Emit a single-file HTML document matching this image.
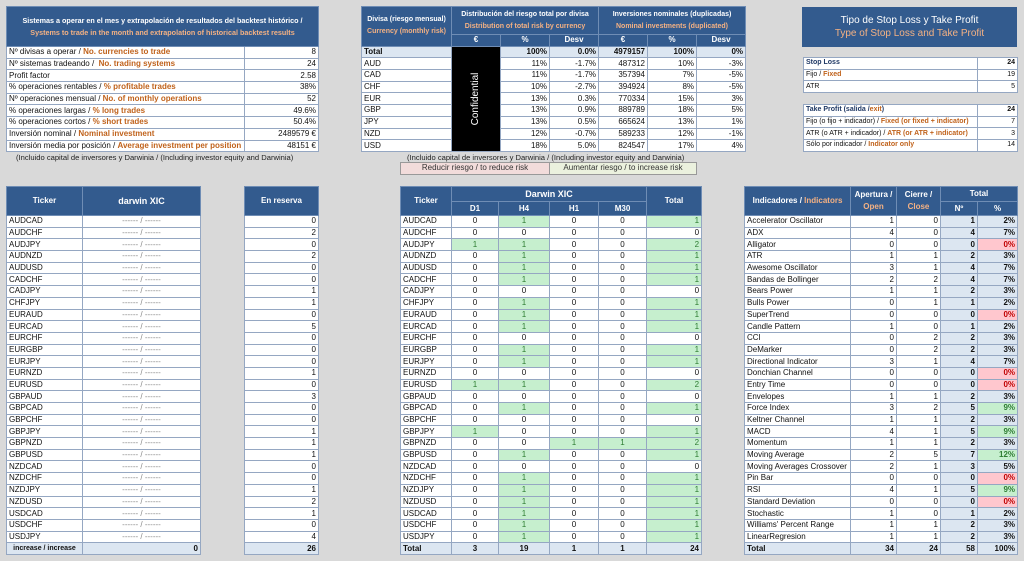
<!DOCTYPE html>
<html><head><meta charset="utf-8"><style>
*{margin:0;padding:0;box-sizing:border-box}
body{width:1024px;height:561px;background:#d9d9d9;font-family:"Liberation Sans",sans-serif;font-size:8px;color:#111;position:relative;overflow:hidden}
table{position:absolute;border-collapse:collapse;table-layout:fixed;background:#fff}
td{border:1px solid #95a7c2;height:11.7px;line-height:10px;padding:0 2px;white-space:nowrap;overflow:hidden}
.h{background:#335b8e;color:#fff;font-weight:bold;text-align:center;border-color:#6f8db5}
.o{color:#c0621b;font-weight:bold}
.ho{color:#f4b183}
.r{text-align:right}.c{text-align:center}.b{font-weight:bold}
.lb{background:#dce6f1}
.g{background:#c6efce;color:#2e7d32}
.rd{background:#ffc7ce;color:#c00000}
.note{position:absolute;font-size:7.6px;color:#222;white-space:nowrap}
.dash{color:#888;text-align:center}
.sm{font-size:7px}
</style></head><body>

<!-- Top-left -->
<table style="left:6px;top:6px;width:312px">
<col style="width:238px"><col style="width:74px">
<tr><td colspan="2" class="h" style="height:40px;line-height:12px;font-size:7.2px">Sistemas a operar en el mes y extrapolación de resultados del backtest histórico /<br><span class="ho">Systems to trade in the month and extrapolation of historical backtest results</span></td></tr>
<tr><td>Nº divisas a operar / <span class="o">No. currencies to trade</span></td><td class="r">8</td></tr>
<tr><td>Nº sistemas tradeando / &nbsp;<span class="o">No. trading systems</span></td><td class="r">24</td></tr>
<tr><td>Profit factor</td><td class="r">2.58</td></tr>
<tr><td>% operaciones rentables / <span class="o">% profitable trades</span></td><td class="r">38%</td></tr>
<tr><td>Nº operaciones mensual / <span class="o">No. of monthly operations</span></td><td class="r">52</td></tr>
<tr><td>% operaciones largas / <span class="o">% long trades</span></td><td class="r">49.6%</td></tr>
<tr><td>% operaciones cortos / <span class="o">% short trades</span></td><td class="r">50.4%</td></tr>
<tr><td>Inversión nominal / <span class="o">Nominal investment</span></td><td class="r">2489579 €</td></tr>
<tr><td>Inversión media por posición / <span class="o">Average investment per position</span></td><td class="r">48151 €</td></tr>
</table>
<div class="note" style="left:16px;top:153px">(Incluido capital de inversores y Darwinia / (Including investor equity and Darwinia)</div>

<!-- Top-mid -->
<table style="left:361px;top:6px;width:384px">
<col style="width:90px"><col style="width:49px"><col style="width:49px"><col style="width:49px"><col style="width:49px"><col style="width:49px"><col style="width:49px">
<tr><td rowspan="2" class="h" style="line-height:12px;font-size:7px">Divisa (riesgo mensual)<br><span class="ho">Currency (monthly risk)</span></td><td colspan="3" class="h" style="height:28px;line-height:12px;font-size:7px">Distribución del riesgo total por divisa<br><span class="ho">Distribution of total risk by currency</span></td><td colspan="3" class="h" style="line-height:12px;font-size:7px">Inversiones nominales (duplicadas)<br><span class="ho">Nominal investments (duplicated)</span></td></tr>
<tr><td class="h">€</td><td class="h">%</td><td class="h">Desv</td><td class="h">€</td><td class="h">%</td><td class="h">Desv</td></tr>
<tr class="lb b"><td>Total</td><td rowspan="9" style="background:#000;color:#fff;position:relative"><div style="position:absolute;left:50%;top:50%;transform:translate(-50%,-50%) rotate(-90deg);font-size:10px;font-weight:normal">Confidential</div></td><td class="r">100%</td><td class="r">0.0%</td><td class="r">4979157</td><td class="r">100%</td><td class="r">0%</td></tr>
<tr><td>AUD</td><td class="r">11%</td><td class="r">-1.7%</td><td class="r">487312</td><td class="r">10%</td><td class="r">-3%</td></tr>
<tr><td>CAD</td><td class="r">11%</td><td class="r">-1.7%</td><td class="r">357394</td><td class="r">7%</td><td class="r">-5%</td></tr>
<tr><td>CHF</td><td class="r">10%</td><td class="r">-2.7%</td><td class="r">394924</td><td class="r">8%</td><td class="r">-5%</td></tr>
<tr><td>EUR</td><td class="r">13%</td><td class="r">0.3%</td><td class="r">770334</td><td class="r">15%</td><td class="r">3%</td></tr>
<tr><td>GBP</td><td class="r">13%</td><td class="r">0.9%</td><td class="r">889789</td><td class="r">18%</td><td class="r">5%</td></tr>
<tr><td>JPY</td><td class="r">13%</td><td class="r">0.5%</td><td class="r">665624</td><td class="r">13%</td><td class="r">1%</td></tr>
<tr><td>NZD</td><td class="r">12%</td><td class="r">-0.7%</td><td class="r">589233</td><td class="r">12%</td><td class="r">-1%</td></tr>
<tr><td>USD</td><td class="r">18%</td><td class="r">5.0%</td><td class="r">824547</td><td class="r">17%</td><td class="r">4%</td></tr>
</table>
<div class="note" style="left:407px;top:153px">(Incluido capital de inversores y Darwinia / (Including investor equity and Darwinia)</div>
<table style="left:400px;top:162px;width:296px">
<col style="width:149px"><col style="width:147px">
<tr><td class="c" style="background:#f2dcdb;color:#333;border-color:#999">Reducir riesgo / to reduce risk</td><td class="c" style="background:#ebf1de;color:#333;border-color:#999">Aumentar riesgo / to increase risk</td></tr>
</table>

<!-- Top-right -->
<div style="position:absolute;left:802px;top:7px;width:215px;height:40px;background:#335b8e;color:#fff;text-align:center;font-size:10px;line-height:13px;padding-top:7px">Tipo de Stop Loss y Take Profit<br><span class="ho">Type of Stop Loss and Take Profit</span></div>
<table style="left:803px;top:57px;width:214px;font-size:7px">
<col style="width:174px"><col style="width:40px">
<tr><td class="b" style="color:#1f3864">Stop Loss</td><td class="r b">24</td></tr>
<tr><td>Fijo / <span class="o">Fixed</span></td><td class="r">19</td></tr>
<tr><td>ATR</td><td class="r">5</td></tr>
</table>
<table style="left:803px;top:104px;width:214px;font-size:7px">
<col style="width:174px"><col style="width:40px">
<tr><td class="b" style="color:#1f3864">Take Profit (salida /<span class="o">exit</span>)</td><td class="r b">24</td></tr>
<tr><td>Fijo (o fijo + indicador) / <span class="o">Fixed (or fixed + indicator)</span></td><td class="r">7</td></tr>
<tr><td>ATR (o ATR + indicador) / <span class="o">ATR (or ATR + indicator)</span></td><td class="r">3</td></tr>
<tr><td>Sólo por indicador / <span class="o">Indicator only</span></td><td class="r">14</td></tr>
</table>

<!-- Bottom: ticker/darwin -->
<table style="left:6px;top:186px;width:194px">
<col style="width:76px"><col style="width:118px">
<tr><td class="h" style="height:29px">Ticker</td><td class="h" style="font-size:9px">darwin XIC</td></tr>
<tr><td>AUDCAD</td><td class="dash">------ / ------</td></tr>
<tr><td>AUDCHF</td><td class="dash">------ / ------</td></tr>
<tr><td>AUDJPY</td><td class="dash">------ / ------</td></tr>
<tr><td>AUDNZD</td><td class="dash">------ / ------</td></tr>
<tr><td>AUDUSD</td><td class="dash">------ / ------</td></tr>
<tr><td>CADCHF</td><td class="dash">------ / ------</td></tr>
<tr><td>CADJPY</td><td class="dash">------ / ------</td></tr>
<tr><td>CHFJPY</td><td class="dash">------ / ------</td></tr>
<tr><td>EURAUD</td><td class="dash">------ / ------</td></tr>
<tr><td>EURCAD</td><td class="dash">------ / ------</td></tr>
<tr><td>EURCHF</td><td class="dash">------ / ------</td></tr>
<tr><td>EURGBP</td><td class="dash">------ / ------</td></tr>
<tr><td>EURJPY</td><td class="dash">------ / ------</td></tr>
<tr><td>EURNZD</td><td class="dash">------ / ------</td></tr>
<tr><td>EURUSD</td><td class="dash">------ / ------</td></tr>
<tr><td>GBPAUD</td><td class="dash">------ / ------</td></tr>
<tr><td>GBPCAD</td><td class="dash">------ / ------</td></tr>
<tr><td>GBPCHF</td><td class="dash">------ / ------</td></tr>
<tr><td>GBPJPY</td><td class="dash">------ / ------</td></tr>
<tr><td>GBPNZD</td><td class="dash">------ / ------</td></tr>
<tr><td>GBPUSD</td><td class="dash">------ / ------</td></tr>
<tr><td>NZDCAD</td><td class="dash">------ / ------</td></tr>
<tr><td>NZDCHF</td><td class="dash">------ / ------</td></tr>
<tr><td>NZDJPY</td><td class="dash">------ / ------</td></tr>
<tr><td>NZDUSD</td><td class="dash">------ / ------</td></tr>
<tr><td>USDCAD</td><td class="dash">------ / ------</td></tr>
<tr><td>USDCHF</td><td class="dash">------ / ------</td></tr>
<tr><td>USDJPY</td><td class="dash">------ / ------</td></tr>
<tr class="lb b"><td class="c sm">increase / increase</td><td class="r">0</td></tr>
</table>

<!-- En reserva -->
<table style="left:244px;top:186px;width:74px">
<col style="width:74px">
<tr><td class="h" style="height:29px">En reserva</td></tr>
<tr><td class="r">0</td></tr><tr><td class="r">2</td></tr><tr><td class="r">0</td></tr><tr><td class="r">2</td></tr><tr><td class="r">0</td></tr><tr><td class="r">0</td></tr><tr><td class="r">1</td></tr><tr><td class="r">1</td></tr><tr><td class="r">0</td></tr><tr><td class="r">5</td></tr><tr><td class="r">0</td></tr><tr><td class="r">0</td></tr><tr><td class="r">0</td></tr><tr><td class="r">1</td></tr><tr><td class="r">0</td></tr><tr><td class="r">3</td></tr><tr><td class="r">0</td></tr><tr><td class="r">0</td></tr><tr><td class="r">1</td></tr><tr><td class="r">1</td></tr><tr><td class="r">1</td></tr><tr><td class="r">0</td></tr><tr><td class="r">0</td></tr><tr><td class="r">1</td></tr><tr><td class="r">2</td></tr><tr><td class="r">1</td></tr><tr><td class="r">0</td></tr><tr><td class="r">4</td></tr>
<tr class="lb b"><td class="r">26</td></tr>
</table>

<!-- Darwin XIC -->
<table style="left:400px;top:186px;width:301px">
<col style="width:51px"><col style="width:47px"><col style="width:51px"><col style="width:49px"><col style="width:48px"><col style="width:55px">
<tr><td rowspan="2" class="h">Ticker</td><td colspan="4" class="h" style="height:15px;font-size:9px">Darwin XIC</td><td rowspan="2" class="h">Total</td></tr>
<tr><td class="h" style="height:14px">D1</td><td class="h">H4</td><td class="h">H1</td><td class="h">M30</td></tr>
<tr><td>AUDCAD</td><td class="c">0</td><td class="c g">1</td><td class="c">0</td><td class="c">0</td><td class="r g">1</td></tr>
<tr><td>AUDCHF</td><td class="c">0</td><td class="c">0</td><td class="c">0</td><td class="c">0</td><td class="r">0</td></tr>
<tr><td>AUDJPY</td><td class="c g">1</td><td class="c g">1</td><td class="c">0</td><td class="c">0</td><td class="r g">2</td></tr>
<tr><td>AUDNZD</td><td class="c">0</td><td class="c g">1</td><td class="c">0</td><td class="c">0</td><td class="r g">1</td></tr>
<tr><td>AUDUSD</td><td class="c">0</td><td class="c g">1</td><td class="c">0</td><td class="c">0</td><td class="r g">1</td></tr>
<tr><td>CADCHF</td><td class="c">0</td><td class="c g">1</td><td class="c">0</td><td class="c">0</td><td class="r g">1</td></tr>
<tr><td>CADJPY</td><td class="c">0</td><td class="c">0</td><td class="c">0</td><td class="c">0</td><td class="r">0</td></tr>
<tr><td>CHFJPY</td><td class="c">0</td><td class="c g">1</td><td class="c">0</td><td class="c">0</td><td class="r g">1</td></tr>
<tr><td>EURAUD</td><td class="c">0</td><td class="c g">1</td><td class="c">0</td><td class="c">0</td><td class="r g">1</td></tr>
<tr><td>EURCAD</td><td class="c">0</td><td class="c g">1</td><td class="c">0</td><td class="c">0</td><td class="r g">1</td></tr>
<tr><td>EURCHF</td><td class="c">0</td><td class="c">0</td><td class="c">0</td><td class="c">0</td><td class="r">0</td></tr>
<tr><td>EURGBP</td><td class="c">0</td><td class="c g">1</td><td class="c">0</td><td class="c">0</td><td class="r g">1</td></tr>
<tr><td>EURJPY</td><td class="c">0</td><td class="c g">1</td><td class="c">0</td><td class="c">0</td><td class="r g">1</td></tr>
<tr><td>EURNZD</td><td class="c">0</td><td class="c">0</td><td class="c">0</td><td class="c">0</td><td class="r">0</td></tr>
<tr><td>EURUSD</td><td class="c g">1</td><td class="c g">1</td><td class="c">0</td><td class="c">0</td><td class="r g">2</td></tr>
<tr><td>GBPAUD</td><td class="c">0</td><td class="c">0</td><td class="c">0</td><td class="c">0</td><td class="r">0</td></tr>
<tr><td>GBPCAD</td><td class="c">0</td><td class="c g">1</td><td class="c">0</td><td class="c">0</td><td class="r g">1</td></tr>
<tr><td>GBPCHF</td><td class="c">0</td><td class="c">0</td><td class="c">0</td><td class="c">0</td><td class="r">0</td></tr>
<tr><td>GBPJPY</td><td class="c g">1</td><td class="c">0</td><td class="c">0</td><td class="c">0</td><td class="r g">1</td></tr>
<tr><td>GBPNZD</td><td class="c">0</td><td class="c">0</td><td class="c g">1</td><td class="c g">1</td><td class="r g">2</td></tr>
<tr><td>GBPUSD</td><td class="c">0</td><td class="c g">1</td><td class="c">0</td><td class="c">0</td><td class="r g">1</td></tr>
<tr><td>NZDCAD</td><td class="c">0</td><td class="c">0</td><td class="c">0</td><td class="c">0</td><td class="r">0</td></tr>
<tr><td>NZDCHF</td><td class="c">0</td><td class="c g">1</td><td class="c">0</td><td class="c">0</td><td class="r g">1</td></tr>
<tr><td>NZDJPY</td><td class="c">0</td><td class="c g">1</td><td class="c">0</td><td class="c">0</td><td class="r g">1</td></tr>
<tr><td>NZDUSD</td><td class="c">0</td><td class="c g">1</td><td class="c">0</td><td class="c">0</td><td class="r g">1</td></tr>
<tr><td>USDCAD</td><td class="c">0</td><td class="c g">1</td><td class="c">0</td><td class="c">0</td><td class="r g">1</td></tr>
<tr><td>USDCHF</td><td class="c">0</td><td class="c g">1</td><td class="c">0</td><td class="c">0</td><td class="r g">1</td></tr>
<tr><td>USDJPY</td><td class="c">0</td><td class="c g">1</td><td class="c">0</td><td class="c">0</td><td class="r g">1</td></tr>
<tr class="lb b"><td>Total</td><td class="c">3</td><td class="c">19</td><td class="c">1</td><td class="c">1</td><td class="r">24</td></tr>
</table>

<!-- Indicators -->
<table style="left:744px;top:186px;width:273px">
<col style="width:106px"><col style="width:46px"><col style="width:44px"><col style="width:37px"><col style="width:40px">
<tr><td rowspan="2" class="h">Indicadores / <span class="ho">Indicators</span></td><td rowspan="2" class="h" style="line-height:12px">Apertura /<br><span class="ho">Open</span></td><td rowspan="2" class="h" style="line-height:12px">Cierre /<br><span class="ho">Close</span></td><td colspan="2" class="h" style="height:15px">Total</td></tr>
<tr><td class="h" style="height:14px">Nº</td><td class="h">%</td></tr>
<tr><td>Accelerator Oscillator</td><td class="r">1</td><td class="r">0</td><td class="r b lb">1</td><td class="r b lb">2%</td></tr>
<tr><td>ADX</td><td class="r">4</td><td class="r">0</td><td class="r b lb">4</td><td class="r b lb">7%</td></tr>
<tr><td>Alligator</td><td class="r">0</td><td class="r">0</td><td class="r b lb">0</td><td class="r b rd">0%</td></tr>
<tr><td>ATR</td><td class="r">1</td><td class="r">1</td><td class="r b lb">2</td><td class="r b lb">3%</td></tr>
<tr><td>Awesome Oscillator</td><td class="r">3</td><td class="r">1</td><td class="r b lb">4</td><td class="r b lb">7%</td></tr>
<tr><td>Bandas de Bollinger</td><td class="r">2</td><td class="r">2</td><td class="r b lb">4</td><td class="r b lb">7%</td></tr>
<tr><td>Bears Power</td><td class="r">1</td><td class="r">1</td><td class="r b lb">2</td><td class="r b lb">3%</td></tr>
<tr><td>Bulls Power</td><td class="r">0</td><td class="r">1</td><td class="r b lb">1</td><td class="r b lb">2%</td></tr>
<tr><td>SuperTrend</td><td class="r">0</td><td class="r">0</td><td class="r b lb">0</td><td class="r b rd">0%</td></tr>
<tr><td>Candle Pattern</td><td class="r">1</td><td class="r">0</td><td class="r b lb">1</td><td class="r b lb">2%</td></tr>
<tr><td>CCI</td><td class="r">0</td><td class="r">2</td><td class="r b lb">2</td><td class="r b lb">3%</td></tr>
<tr><td>DeMarker</td><td class="r">0</td><td class="r">2</td><td class="r b lb">2</td><td class="r b lb">3%</td></tr>
<tr><td>Directional Indicator</td><td class="r">3</td><td class="r">1</td><td class="r b lb">4</td><td class="r b lb">7%</td></tr>
<tr><td>Donchian Channel</td><td class="r">0</td><td class="r">0</td><td class="r b lb">0</td><td class="r b rd">0%</td></tr>
<tr><td>Entry Time</td><td class="r">0</td><td class="r">0</td><td class="r b lb">0</td><td class="r b rd">0%</td></tr>
<tr><td>Envelopes</td><td class="r">1</td><td class="r">1</td><td class="r b lb">2</td><td class="r b lb">3%</td></tr>
<tr><td>Force Index</td><td class="r">3</td><td class="r">2</td><td class="r b lb">5</td><td class="r b g">9%</td></tr>
<tr><td>Keltner Channel</td><td class="r">1</td><td class="r">1</td><td class="r b lb">2</td><td class="r b lb">3%</td></tr>
<tr><td>MACD</td><td class="r">4</td><td class="r">1</td><td class="r b lb">5</td><td class="r b g">9%</td></tr>
<tr><td>Momentum</td><td class="r">1</td><td class="r">1</td><td class="r b lb">2</td><td class="r b lb">3%</td></tr>
<tr><td>Moving Average</td><td class="r">2</td><td class="r">5</td><td class="r b lb">7</td><td class="r b g">12%</td></tr>
<tr><td>Moving Averages Crossover</td><td class="r">2</td><td class="r">1</td><td class="r b lb">3</td><td class="r b lb">5%</td></tr>
<tr><td>Pin Bar</td><td class="r">0</td><td class="r">0</td><td class="r b lb">0</td><td class="r b rd">0%</td></tr>
<tr><td>RSI</td><td class="r">4</td><td class="r">1</td><td class="r b lb">5</td><td class="r b g">9%</td></tr>
<tr><td>Standard Deviation</td><td class="r">0</td><td class="r">0</td><td class="r b lb">0</td><td class="r b rd">0%</td></tr>
<tr><td>Stochastic</td><td class="r">1</td><td class="r">0</td><td class="r b lb">1</td><td class="r b lb">2%</td></tr>
<tr><td>Williams' Percent Range</td><td class="r">1</td><td class="r">1</td><td class="r b lb">2</td><td class="r b lb">3%</td></tr>
<tr><td>LinearRegresion</td><td class="r">1</td><td class="r">1</td><td class="r b lb">2</td><td class="r b lb">3%</td></tr>
<tr class="lb b"><td>Total</td><td class="r">34</td><td class="r">24</td><td class="r">58</td><td class="r">100%</td></tr>
</table>
</body></html>
